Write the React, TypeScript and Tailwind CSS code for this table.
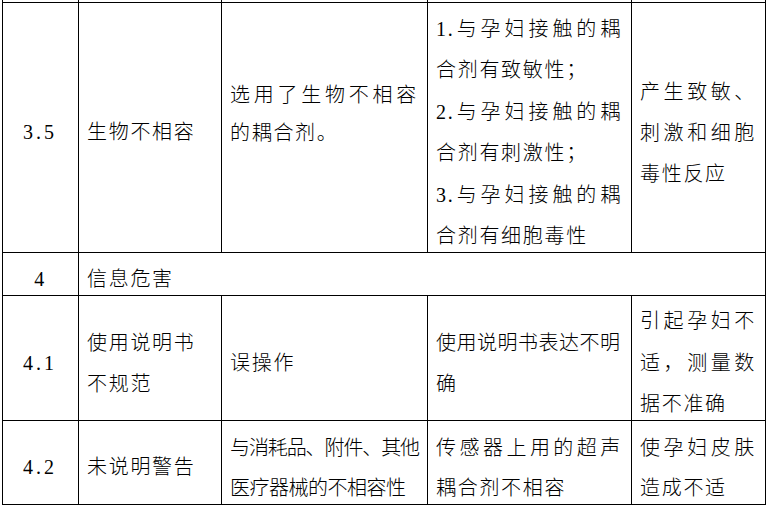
import React from "react";
import clsx from "clsx";

// CJK text is kept as \u escapes so the bundle stays ASCII
const T = {
  bioIncompat: "\u751F\u7269\u4E0D\u76F8\u5BB9",
  chose1: "\u9009\u7528\u4E86\u751F\u7269\u4E0D\u76F8\u5BB9",
  chose2: "\u7684\u8026\u5408\u5242\u3002",
  contact1: "1.\u4E0E\u5B55\u5987\u63A5\u89E6\u7684\u8026",
  sens: "\u5408\u5242\u6709\u81F4\u654F\u6027\uFF1B",
  contact2: "2.\u4E0E\u5B55\u5987\u63A5\u89E6\u7684\u8026",
  irrit: "\u5408\u5242\u6709\u523A\u6FC0\u6027\uFF1B",
  contact3: "3.\u4E0E\u5B55\u5987\u63A5\u89E6\u7684\u8026",
  cyto: "\u5408\u5242\u6709\u7EC6\u80DE\u6BD2\u6027",
  res1: "\u4EA7\u751F\u81F4\u654F\u3001",
  res2: "\u523A\u6FC0\u548C\u7EC6\u80DE",
  res3: "\u6BD2\u6027\u53CD\u5E94",
  info: "\u4FE1\u606F\u5371\u5BB3",
  manual1: "\u4F7F\u7528\u8BF4\u660E\u4E66",
  manual2: "\u4E0D\u89C4\u8303",
  misuse: "\u8BEF\u64CD\u4F5C",
  unclear1: "\u4F7F\u7528\u8BF4\u660E\u4E66\u8868\u8FBE\u4E0D\u660E",
  unclear2: "\u786E",
  harm1: "\u5F15\u8D77\u5B55\u5987\u4E0D",
  harm2: "\u9002\uFF0C\u6D4B\u91CF\u6570",
  harm3: "\u636E\u4E0D\u51C6\u786E",
  warn: "\u672A\u8BF4\u660E\u8B66\u544A",
  access1: "\u4E0E\u6D88\u8017\u54C1\u3001\u9644\u4EF6\u3001\u5176\u4ED6",
  access2: "\u533B\u7597\u5668\u68B0\u7684\u4E0D\u76F8\u5BB9\u6027",
  gel1: "\u4F20\u611F\u5668\u4E0A\u7528\u7684\u8D85\u58F0",
  gel2: "\u8026\u5408\u5242\u4E0D\u76F8\u5BB9",
  skin1: "\u4F7F\u5B55\u5987\u76AE\u80A4",
  skin2: "\u9020\u6210\u4E0D\u9002",
};

type LineProps = {
  children?: React.ReactNode;
  justify?: boolean;
  className?: string;
};

function Line({ children, justify = false, className }: LineProps) {
  return (
    <div
      className={clsx(
        justify ? "text-justify [text-align-last:justify]" : "whitespace-nowrap",
        className,
      )}
    >
      {children ?? "\u00a0"}
    </div>
  );
}

type CellProps = {
  children?: React.ReactNode;
  center?: boolean;
  className?: string;
};

function Cell({ children, center = false, className }: CellProps) {
  return (
    <div
      className={clsx(
        "bg-white flex flex-col justify-center pt-[11px] pl-[8px] pr-[9px] min-w-0",
        center && "items-center text-center",
        className,
      )}
    >
      {children}
    </div>
  );
}

export default function App() {
  return (
    <div className="w-[768px] h-[507px] bg-white overflow-hidden">
      {/* 1px rules = black background through gap-px */}
      <div className="ml-[2px] w-[764px] bg-black px-px pb-px grid gap-px grid-cols-[75px_142px_205px_203px_133px] grid-rows-[2px_249px_42px_124px_83px] text-[20px] font-light tracking-[1.7px] leading-[41.5px] text-black font-['Liberation_Serif','Noto_Sans_CJK_SC',serif]">
        {/* cut-off bottom of the row above */}
        <div className="bg-white" />
        <div className="bg-white" />
        <div className="bg-white" />
        <div className="bg-white" />
        <div className="bg-white" />

        {/* 3.5 */}
        <Cell center>
          <Line className="tracking-[3px]">3.5</Line>
        </Cell>
        <Cell>
          <Line>{T.bioIncompat}</Line>
        </Cell>
        <Cell className="leading-[38px]">
          <Line justify>{T.chose1}</Line>
          <Line>{T.chose2}</Line>
          <Line />
        </Cell>
        <Cell>
          <Line justify>{T.contact1}</Line>
          <Line>{T.sens}</Line>
          <Line justify>{T.contact2}</Line>
          <Line>{T.irrit}</Line>
          <Line justify>{T.contact3}</Line>
          <Line>{T.cyto}</Line>
        </Cell>
        <Cell className="leading-[41px]">
          <Line justify>{T.res1}</Line>
          <Line justify>{T.res2}</Line>
          <Line>{T.res3}</Line>
        </Cell>

        {/* 4 */}
        <Cell center>
          <Line>4</Line>
        </Cell>
        <Cell className="col-span-4">
          <Line>{T.info}</Line>
        </Cell>

        {/* 4.1 */}
        <Cell center className="leading-[41px]">
          <Line className="tracking-[3px]">4.1</Line>
        </Cell>
        <Cell className="leading-[41px]">
          <Line>{T.manual1}</Line>
          <Line>{T.manual2}</Line>
        </Cell>
        <Cell>
          <Line>{T.misuse}</Line>
        </Cell>
        <Cell className="leading-[41px]">
          <Line className="tracking-[0.5px]">{T.unclear1}</Line>
          <Line>{T.unclear2}</Line>
        </Cell>
        <Cell>
          <Line justify>{T.harm1}</Line>
          <Line justify>{T.harm2}</Line>
          <Line>{T.harm3}</Line>
        </Cell>

        {/* 4.2 */}
        <Cell center>
          <Line className="tracking-[3px]">4.2</Line>
        </Cell>
        <Cell>
          <Line>{T.warn}</Line>
        </Cell>
        <Cell className="leading-[40px]">
          <Line className="tracking-[-1.1px]">{T.access1}</Line>
          <Line className="tracking-[-0.5px]">{T.access2}</Line>
        </Cell>
        <Cell className="leading-[40px]">
          <Line justify>{T.gel1}</Line>
          <Line>{T.gel2}</Line>
        </Cell>
        <Cell className="leading-[40px]">
          <Line justify>{T.skin1}</Line>
          <Line>{T.skin2}</Line>
        </Cell>
      </div>
    </div>
  );
}
